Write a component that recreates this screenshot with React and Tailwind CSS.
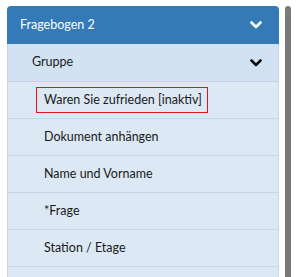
import React from 'react';

const items = [
  { id: 1, label: 'Waren Sie zufrieden [inaktiv]', marked: true },
  { id: 2, label: 'Dokument anhängen' },
  { id: 3, label: 'Name und Vorname' },
  { id: 4, label: '*Frage' },
  { id: 5, label: 'Station / Etage' },
  { id: 6, label: '' },
];

const Chevron = ({ color }) => (
  <svg width="12" height="8" viewBox="0 0 12 8" fill="none">
    <path d="M1.5 1.5 L6 6 L10.5 1.5" stroke={color} strokeWidth="2.6" strokeLinecap="round" strokeLinejoin="round" />
  </svg>
);

const App = () => {
  return (
    <div className="w-[300px] h-[277px] overflow-hidden bg-white flex pt-[6px] pl-[7px]" style={{ fontFamily: 'Lato, "Noto Sans", sans-serif' }}>
      <div className="w-[272px] flex flex-col">
        {/* Header */}
        <div className="h-[38px] shrink-0 bg-[#337ab7] rounded-t-[4px] flex items-center justify-between pl-[13px] pr-[17px] text-white text-[12.5px]">
          <span>Fragebogen 2</span>
          <Chevron color="#ffffff" />
        </div>

        {/* Group */}
        <div className="h-[38px] shrink-0 bg-[#d2e2f3] border-x border-b border-[#c3d3e3] flex items-center justify-between pl-[24px] pr-[16px] text-[12.5px] text-[#1a1a1a]">
          <span>Gruppe</span>
          <Chevron color="#111111" />
        </div>

        {/* Items */}
        {items.map((item) => (
          <div key={item.id} className="h-[37px] shrink-0 bg-[#dce8f4] border-x border-b border-[#c8d7e6] flex items-center pl-[28px] text-[12.5px] text-[#1a1a1a] whitespace-nowrap">
            {item.marked ? (
              <span className="border border-[#e3141b] w-[172px] h-[26px] flex items-center pl-[7px]">{item.label}</span>
            ) : (
              <span className="pl-[8px]">{item.label}</span>
            )}
          </div>
        ))}
      </div>

      {/* Scrollbar */}
      <div className="ml-[6px] w-[6px] bg-[#7a7a7a] rounded-t-[3px]" />
    </div>
  );
};

export default App;
